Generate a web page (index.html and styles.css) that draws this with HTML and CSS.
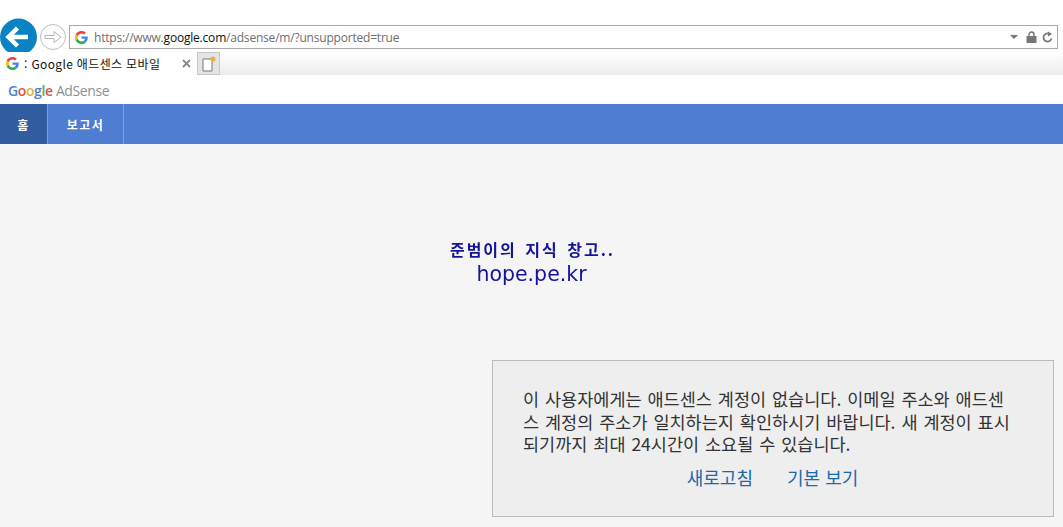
FILE: index.html
```html
<!DOCTYPE html>
<html lang="ko">
<head>
<meta charset="utf-8">
<title>Google 애드센스 모바일</title>
<link rel="stylesheet" href="styles.css">
</head>
<body>
<header class="browser">
  <div class="toolbar">
    <button class="back" aria-label="뒤로">
      <svg viewBox="0 0 38 38" width="38" height="38"><circle cx="18.500" cy="19" r="18.500" fill="#0a83c4"/><path d="M8 19h20M17.500 10l-9 9 9 9" fill="none" stroke="#fff" stroke-width="4.500"/></svg>
    </button>
    <button class="forward" aria-label="앞으로">
      <svg viewBox="0 0 26 26" width="26" height="26"><circle cx="13" cy="13" r="12.500" fill="#fff" stroke="#bdbdbd"/><path d="M5 11.500h9V7.500l7 5.500-7 5.500v-4H5z" fill="#fff" stroke="#b5b5b5"/></svg>
    </button>
    <div class="address">
      <svg class="g" viewBox="0 0 48 48" width="13" height="13"><path fill="#ea4335" d="M24 9.500c3.500 0 6.700 1.300 9.100 3.500l6.800-6.800C35.800 2.400 30.200 0 24 0 14.600 0 6.500 5.400 2.600 13.200l7.900 6.200C12.400 13.700 17.700 9.500 24 9.500z"/><path fill="#4285f4" d="M47 24.500c0-1.600-.2-3.200-.4-4.500H24v9h13c-.6 3-2.300 5.500-4.800 7.200l7.700 6c4.500-4.200 7.100-10.300 7.100-17.700z"/><path fill="#fbbc05" d="M10.500 28.600A14.500 14.500 0 0 1 10.500 19.400l-7.900-6.200a24 24 0 0 0 0 21.600z"/><path fill="#34a853" d="M24 48c6.200 0 11.900-2 15.900-5.800l-7.700-6c-2.100 1.400-4.900 2.300-8.200 2.300-6.300 0-11.600-4.200-13.500-9.900l-7.900 6.200C6.500 42.600 14.600 48 24 48z"/></svg>
      <span class="url"><span class="dim">https://www.</span><span class="host">google.com</span><span class="dim">/adsense/m/?unsupported=true</span></span>
      <span class="addr-tools">
        <svg viewBox="0 0 8 5" width="8" height="5"><path d="M0 0h8L4 4z" fill="#777"/></svg>
        <svg viewBox="0 0 11 12" width="11" height="12"><path d="M3 5V3.500a2.500 2.500 0 0 1 5 0V5" fill="none" stroke="#777" stroke-width="1.400"/><rect x=".5" y="5" width="10" height="7" fill="#777"/></svg>
        <svg viewBox="0 0 12 12" width="11" height="12"><path d="M10.300 7.500A4.400 4.400 0 1 1 7.300 2.300" fill="none" stroke="#777" stroke-width="1.900"/><path d="M6.500 0l4.500 2.800-4.500 2.700z" fill="#777"/></svg>
      </span>
    </div>
  </div>
  <div class="tabs">
    <div class="tab">
      <svg viewBox="0 0 48 48" width="13" height="13"><path fill="#ea4335" d="M24 9.500c3.500 0 6.700 1.300 9.100 3.500l6.800-6.800C35.800 2.400 30.200 0 24 0 14.600 0 6.500 5.400 2.600 13.200l7.900 6.200C12.400 13.700 17.700 9.500 24 9.500z"/><path fill="#4285f4" d="M47 24.500c0-1.600-.2-3.200-.4-4.500H24v9h13c-.6 3-2.300 5.500-4.800 7.200l7.700 6c4.500-4.200 7.100-10.300 7.100-17.700z"/><path fill="#fbbc05" d="M10.500 28.600A14.500 14.500 0 0 1 10.500 19.400l-7.900-6.200a24 24 0 0 0 0 21.600z"/><path fill="#34a853" d="M24 48c6.200 0 11.900-2 15.900-5.800l-7.700-6c-2.100 1.400-4.900 2.300-8.200 2.300-6.300 0-11.600-4.200-13.500-9.900l-7.900 6.200C6.500 42.600 14.600 48 24 48z"/></svg>
      <span class="tab-title">: Google 애드센스 모바일</span>
      <svg class="close" viewBox="0 0 9 9" width="9" height="9"><path d="M1 1l7 7M8 1l-7 7" stroke="#8a8a8a" stroke-width="1.800"/></svg>
    </div>
    <div class="new-tab">
      <svg viewBox="0 0 14 16" width="14" height="16"><path d="M1 3h9v12H1z" fill="#fff" stroke="#777"/><circle cx="11" cy="3" r="2.500" fill="#f0b040"/></svg>
    </div>
  </div>
</header>
<div class="brand"><span class="wordmark"><span class="b">G</span><span class="r">o</span><span class="y">o</span><span class="b">g</span><span class="gr">l</span><span class="r">e</span></span> <span class="product">AdSense</span></div>
<nav class="nav">
  <a class="nav-item active">홈</a>
  <a class="nav-item">보고서</a>
</nav>
<main class="content">
  <div class="watermark">
    <div class="wm-ko">준범이의 지식 창고..</div>
    <div class="wm-en">hope.pe.kr</div>
  </div>
  <section class="message">
    <p>이 사용자에게는 애드센스 계정이 없습니다. 이메일 주소와 애드센스 계정의 주소가 일치하는지 확인하시기 바랍니다. 새 계정이 표시되기까지 최대 24시간이 소요될 수 있습니다.</p>
    <div class="actions"><a>새로고침</a><a>기본 보기</a></div>
  </section>
</main>
</body>
</html>
```
FILE: styles.css
```css
* { box-sizing: border-box; }
html, body { margin: 0; height: 527px; overflow: hidden; }
body {
  display: flex;
  flex-direction: column;
  background: #f5f5f5;
  font-family: "Noto Sans CJK KR", "Liberation Sans", sans-serif;
  color: #333;
}
.browser { background: #fff; height: 75px; flex: none; }
.toolbar {
  height: 52px;
  padding: 18px 5px 0 0;
  display: flex;
  align-items: flex-start;
}
.toolbar button { border: 0; padding: 0; background: none; display: block; height: 38px; }
.back { width: 38px; }
.forward { width: 26px; margin: 6px 3px 0 2px; height: 26px !important; }
.address {
  flex: 1;
  height: 24px;
  margin-top: 7px;
  border: 1px solid #a9a9a9;
  display: flex;
  align-items: center;
  padding: 0 4px 0 5px;
  background: #fff;
}
.g { flex: none; }
.url {
  margin-left: 6px;
  font: 12px "Open Sans", "Liberation Sans", sans-serif;
  flex: 1;
  letter-spacing: -.2px;
}
.dim { color: #6e6e6e; }
.host { color: #111; }
.addr-tools { display: flex; align-items: center; gap: 5px; }
.addr-tools svg:first-child { margin-right: 3px; }
.tabs {
  height: 23px;
  display: flex;
  background: linear-gradient(#fff, #ececec);
}
.tab {
  width: 197px;
  background: #fff;
  display: flex;
  align-items: center;
  padding: 0 5px 0 6px;
}
.tab-title {
  margin-left: 5px;
  font-size: 12px;
  letter-spacing: .35px;
  color: #111;
  flex: 1;
  white-space: nowrap;
}
.close { margin-right: 1px; }
.new-tab {
  width: 23px;
  height: 23px;
  background: #e4e4e4;
  border: 1px solid #c8c8c8;
  display: flex;
  align-items: center;
  justify-content: center;
}
.brand {
  height: 29px;
  flex: none;
  background: #fff;
  padding: 6px 0 0 8px;
  font: 14px/20px "Open Sans", "Liberation Sans", sans-serif;
  color: #8a8f94;
  letter-spacing: -.4px;
}
.wordmark { font-weight: 600; }
.b { color: #4f7fd8; } .r { color: #d9534a; } .y { color: #e3b23c; } .gr { color: #5aa868; }
.nav {
  height: 40px;
  flex: none;
  background: #4e7dd1;
  display: flex;
}
.nav-item {
  display: flex;
  align-items: center;
  justify-content: center;
  color: #fff;
  font-size: 12px;
  font-weight: 700;
  letter-spacing: 1.500px;
  border-right: 1px solid #7d9fdd;
}
.nav-item:first-child { width: 48px; background: #2f5d9f; }
.nav-item:nth-child(2) { width: 76px; }
.content {
  flex: 1;
  display: flex;
  flex-direction: column;
  min-height: 0;
}
.watermark {
  margin: 92px 0 0 440px;
  width: 185px;
  text-align: center;
  color: #14149a;
  height: 50px;
  filter: blur(.4px);
}
.wm-ko { font-size: 16px; line-height: 26px; font-weight: 700; letter-spacing: 2px; word-spacing: 2px; white-space: nowrap; }
.wm-en { font: 20.500px/24px "DejaVu Sans", sans-serif; margin-left: -2px; }
.message {
  margin: 74px 0 0 492px;
  width: 562px;
  height: 157px;
  background: #eee;
  border: 1px solid #bbb;
  padding: 27px 34px 0 30px;
}
.message p {
  margin: 0;
  font-size: 17.500px;
  line-height: 22.500px;
  word-spacing: 1px;
  word-break: break-all;
  color: #333;
}
.actions {
  display: flex;
  justify-content: center;
  gap: 34px;
  margin: 9px 0 0 3px;
  font-size: 18px;
  line-height: 24px;
  color: #1a6aa8;
}
```
